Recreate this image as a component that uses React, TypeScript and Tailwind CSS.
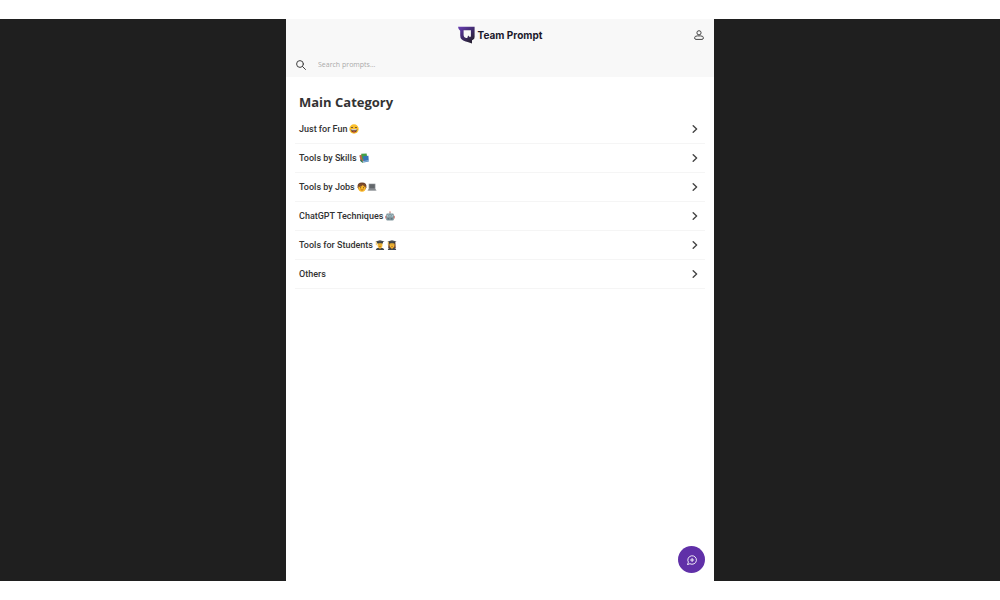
import type { ReactNode } from "react";

function Logo() {
  return (
    <svg viewBox="0 0 17 18" className="h-[18px] w-[17px]" aria-hidden="true">
      <defs>
        <linearGradient id="mark" x1="0" y1="0" x2="0.7" y2="0.9">
          <stop offset="0" stopColor="#6a3fb5" />
          <stop offset="0.6" stopColor="#3f2a6b" />
          <stop offset="1" stopColor="#2a2338" />
        </linearGradient>
      </defs>
      <path
        fillRule="evenodd"
        fill="url(#mark)"
        d="M0 0.8H16.6V11Q16.6 13 15 13.8L14 14.3V17.6L9.6 16Q8.8 15.7 7.6 15.4Q2.2 14.4 2.2 9.6V4.8Q0.4 3.8 0 0.8ZM5.6 4.2V9.2Q5.6 11.6 8 11.9L9.3 12L10.1 9.6L12 11.2L12.9 10.2V4.2Z"
      />
    </svg>
  );
}

function Emoji({ label, wide, children }: { label: string; wide?: boolean; children: ReactNode }) {
  return (
    <svg
      role="img"
      aria-label={label}
      viewBox={wide ? "0 0 20 10" : "0 0 10 10"}
      className={wide ? "h-[10px] w-[20px]" : "h-[10px] w-[10px]"}
    >
      {children}
    </svg>
  );
}

function Grin() {
  return (
    <Emoji label="Grinning face">
      <circle cx="5" cy="5" r="4.7" fill="#fbc02d" />
      <path d="M2 3.9Q3 2.3 4 3.9M6 3.9Q7 2.3 8 3.9" fill="none" stroke="#5d4037" strokeWidth="0.8" />
      <path d="M1.7 5.1H8.3Q7.9 8.6 5 8.6T1.7 5.1Z" fill="#5d3a20" />
      <path d="M2.2 5.3H7.8L7.6 6.2H2.4Z" fill="#fff" />
      <path d="M3.2 7.8Q5 6.7 6.8 7.8Q5 9 3.2 7.8Z" fill="#e85a4f" />
    </Emoji>
  );
}

function Books() {
  return (
    <Emoji label="Books">
      <path d="M0.3 2.5L3.5 1.2L5.2 7.5L2 9Z" fill="#c0654a" />
      <path d="M2.2 0.8L7.6 0.4L8.4 5.5L3.3 6.6Z" fill="#43a047" />
      <path d="M4 3.3L9.4 2.8L9.8 8.4L4.6 9.4Z" fill="#3676b8" />
      <path d="M1.8 6L4.6 9.4L3.3 9.7L1 7.6Z" fill="#2e7d55" />
      <path d="M4.8 8.5L9.6 7.6" stroke="#d9e5ee" strokeWidth="0.6" />
    </Emoji>
  );
}

function Technologist() {
  return (
    <Emoji label="Person and laptop" wide>
      <path d="M0.6 5.4Q0 0.4 5 0.4T9.4 5.4L8.2 7.6H1.8Z" fill="#6b3f27" />
      <ellipse cx="5" cy="5.8" rx="3.7" ry="3.9" fill="#fbb829" />
      <path d="M1.3 5Q4.7 4.8 5.9 2.9Q6.8 4.6 8.8 5Q8.7 1.4 5 1.4T1.3 5Z" fill="#7d4b2c" />
      <circle cx="3.6" cy="5.8" r="0.5" fill="#43291b" />
      <circle cx="6.5" cy="5.8" r="0.5" fill="#43291b" />
      <path d="M3.7 7.6Q5 8.6 6.3 7.6" stroke="#894721" strokeWidth="0.6" fill="none" />
      <path d="M11.7 1.7H18.4V7H11.7Z" fill="#8a8f94" />
      <path d="M12.4 2.3H17.7V6.3H12.4Z" fill="#63676b" />
      <path d="M11.4 7H18.7L19.6 8.8H10.5Z" fill="#9ea2a6" />
      <path d="M11.8 7.7H18.3" stroke="#6d7175" strokeWidth="0.6" />
    </Emoji>
  );
}

function Robot() {
  return (
    <Emoji label="Robot">
      <path d="M5 1V3" stroke="#7e909b" strokeWidth="0.8" />
      <circle cx="5" cy="0.9" r="0.7" fill="#e57362" />
      <path d="M0.2 4.8H9.8V7.5H0.2Z" fill="#d5766e" />
      <rect x="1.2" y="2.5" width="7.6" height="7" rx="1.2" fill="#84999f" />
      <circle cx="3.3" cy="4.9" r="1.1" fill="#d5f0f6" />
      <circle cx="6.7" cy="4.9" r="1.1" fill="#d5f0f6" />
      <circle cx="3.3" cy="4.9" r="0.6" fill="#395767" />
      <circle cx="6.7" cy="4.9" r="0.6" fill="#395767" />
      <path d="M2.7 7H7.3V8.5H2.7Z" fill="#4b616b" />
      <path d="M4.2 7V8.5M5.8 7V8.5" stroke="#dfe7eb" strokeWidth="0.5" />
    </Emoji>
  );
}

function Graduate({ label, long }: { label: string; long?: boolean }) {
  return (
    <Emoji label={label}>
      {long && <path d="M1.6 2H8.4L8.8 8.2H1.2Z" fill="#70452d" />}
      <path d="M0.8 10Q1 7.4 5 7.4T9.2 10Z" fill="#42474b" />
      <path d="M4 6.5H6V8L5 9.3L4 8Z" fill="#e79b25" />
      <ellipse cx="5" cy="4.9" rx="2.5" ry="2.9" fill="#fbbd35" />
      <path d="M2.1 2H7.9V3.6Q5 2.8 2.1 3.6Z" fill="#303438" />
      <path d="M0.4 1.5L5 0.2L9.6 1.5L5 2.9Z" fill="#484d51" />
      <path d="M1.3 1.7V5.2" stroke="#e6ae27" strokeWidth="0.7" />
      <circle cx="4" cy="4.8" r="0.35" fill="#493022" />
      <circle cx="6" cy="4.8" r="0.35" fill="#493022" />
      <path d="M4 6.2Q5 6.8 6 6.2" stroke="#7e4522" strokeWidth="0.5" fill="none" />
    </Emoji>
  );
}

const categories: { name: string; icons?: ReactNode }[] = [
  { name: "Just for Fun", icons: <Grin /> },
  { name: "Tools by Skills", icons: <Books /> },
  { name: "Tools by Jobs", icons: <Technologist /> },
  { name: "ChatGPT Techniques", icons: <Robot /> },
  {
    name: "Tools for Students",
    icons: (
      <>
        <Graduate label="Man student" />
        <Graduate label="Woman student" long />
      </>
    ),
  },
  { name: "Others" },
];

export default function App() {
  return (
    <div className="flex min-h-screen flex-col bg-white py-[19px]">
      <div className="flex flex-1 justify-center bg-[#1f1f1f]">
        <div className="flex w-[42.8%] flex-col bg-white">
          <header className="bg-[#f8f8f8]">
            <div className="grid h-8 grid-cols-[1fr_auto_1fr] items-center px-[9px]">
              <a href="#home" className="col-start-2 flex items-center gap-[3px] font-['Inter'] text-[10px] leading-4 font-bold text-[#1b182b]">
                <Logo />
                Team Prompt
              </a>
              <button type="button" aria-label="Account" className="flex size-3 items-center justify-center justify-self-end">
                <svg viewBox="0 0 10 10" className="size-[10px]" fill="none" stroke="#444" strokeWidth="1">
                  <circle cx="5" cy="2.8" r="2.1" />
                  <path d="M3.4 5.9H6.6Q9.4 5.9 9.4 7.8Q9.4 9.4 8 9.4H2Q0.6 9.4 0.6 7.8Q0.6 5.9 3.4 5.9Z" />
                </svg>
              </button>
            </div>
            <label className="flex h-[26px] items-center gap-3 px-[10px] pt-[2px]">
              <svg viewBox="0 0 10 10" className="size-[10px]" fill="none" stroke="#404040" strokeWidth="1" strokeLinecap="round" aria-hidden="true">
                <circle cx="4" cy="4" r="3.4" />
                <path d="M6.5 6.5L9.5 9.5" />
              </svg>
              <input
                type="search"
                aria-label="Search prompts"
                placeholder="Search prompts..."
                className="min-w-0 flex-1 bg-transparent font-['Open_Sans'] text-[7px] leading-3 outline-none placeholder:text-[#aaa]"
              />
            </label>
          </header>
          <main className="flex flex-1 flex-col px-[9px] pt-4">
            <h1 className="px-1 pb-1 font-['Open_Sans'] text-[13px] leading-[18px] font-bold text-[#333]">Main Category</h1>
            <ul>
              {categories.map(({ name, icons }) => (
                <li key={name} className="border-b border-[#f5f5f5]">
                  <a href="#category" className="flex h-7 items-center justify-between pr-[7px] pl-1 font-['Roboto'] text-[9px] leading-3 font-medium text-[#333]">
                    <span className="flex items-center gap-[2px]">
                      {name}
                      {icons}
                    </span>
                    <svg viewBox="0 0 6 8" className="h-2 w-[6px]" fill="none" stroke="#444" strokeWidth="1.4" strokeLinecap="round" strokeLinejoin="round" aria-hidden="true">
                      <path d="M1.2 0.8L4.6 4L1.2 7.2" />
                    </svg>
                  </a>
                </li>
              ))}
            </ul>
            <button type="button" aria-label="New prompt" className="mt-auto mb-2 flex size-[27px] items-center justify-center self-end rounded-full bg-[#6030a8]">
              <svg viewBox="0 0 10 10" className="size-[10px]" fill="none" stroke="#fff" strokeWidth="0.9" strokeLinecap="round" strokeLinejoin="round">
                <path d="M0.6 9.3L1.4 7.2A4.3 4.3 0 1 1 3.2 8.9Z" />
                <path d="M5.1 3.4V6.6M3.5 5H6.7" />
              </svg>
            </button>
          </main>
        </div>
      </div>
    </div>
  );
}
